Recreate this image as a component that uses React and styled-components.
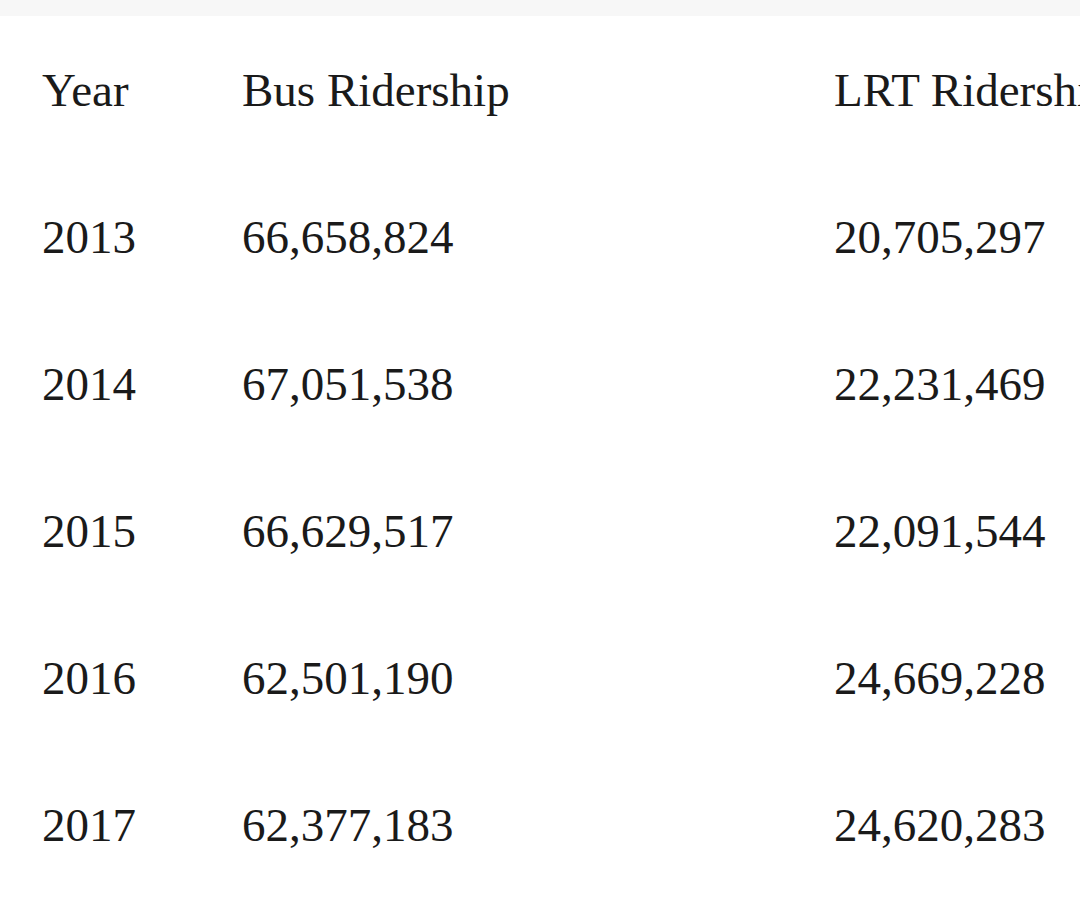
import styled, { createGlobalStyle } from 'styled-components';

const GlobalStyle = createGlobalStyle`
    html, body {
        margin: 0;
        padding: 0;
        background: #fff;
    }
`

const Page = styled.div`
    width: 1080px;
    height: 912px;
    overflow: hidden;
    background: #fff;
`

const TopBand = styled.div`
    height: 16px;
    background: #f7f7f7;
`

const Table = styled.div`
    display: grid;
    grid-template-columns: 200px 592px 400px;
    padding-left: 42px;
    font-family: "Liberation Serif", "DejaVu Serif", serif;
    font-size: 47px;
    color: #1a1a1a;
`

const Cell = styled.div`
    height: 147px;
    display: flex;
    align-items: center;
    white-space: nowrap;
`

const rows = [
    ['2013', '66,658,824', '20,705,297'],
    ['2014', '67,051,538', '22,231,469'],
    ['2015', '66,629,517', '22,091,544'],
    ['2016', '62,501,190', '24,669,228'],
    ['2017', '62,377,183', '24,620,283'],
]

const App = () => {
    const header = ['Year', 'Bus Ridership', 'LRT Ridership']

    return (
        <Page>
            <GlobalStyle />
            <TopBand />
            <Table>
                {header.map(h => <Cell key={h}>{h}</Cell>)}
                {rows.map(row => row.map((v, i) => <Cell key={row[0] + i}>{v}</Cell>))}
            </Table>
        </Page>
    )
}

export default App;
